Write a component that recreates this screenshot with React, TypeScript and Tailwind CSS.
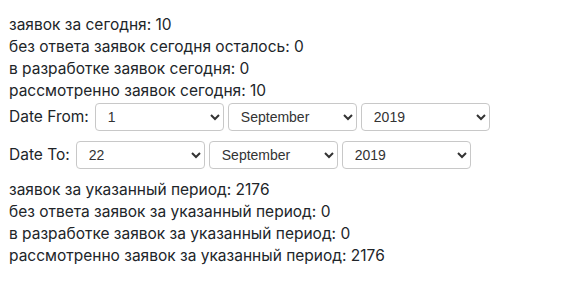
import React from 'react';

const days = Array.from({ length: 31 }, (_, i) => String(i + 1));
const months = [
  'January', 'February', 'March', 'April', 'May', 'June',
  'July', 'August', 'September', 'October', 'November', 'December',
];
const years = ['2017', '2018', '2019', '2020'];

function Sel({ value, options }: { value: string; options: string[] }) {
  return (
    <select
      defaultValue={value}
      className="w-[129px] h-[28px] rounded-[4px] border border-[#c8c8c8] bg-white pl-[8px] pr-[4px] text-[14px] text-[#333] font-['Liberation_Sans',Arial,sans-serif]"
    >
      {options.map((o) => (
        <option key={o} value={o}>
          {o}
        </option>
      ))}
    </select>
  );
}

export default function App() {
  return (
    <div className="pt-[14px] pl-[9px] text-[15.5px] leading-[22px] text-[#212529] font-['Inter',sans-serif]">
      <div>заявок за сегодня: 10</div>
      <div>без ответа заявок сегодня осталось: 0</div>
      <div>в разработке заявок сегодня: 0</div>
      <div>рассмотренно заявок сегодня: 10</div>

      <div className="flex items-center gap-[4px] mt-[1px]">
        <span className="mr-[2px]">Date From:</span>
        <Sel value="1" options={days} />
        <Sel value="September" options={months} />
        <Sel value="2019" options={years} />
      </div>
      <div className="flex items-center gap-[4px] mt-[10px]">
        <span className="mr-[2px]">Date To:</span>
        <Sel value="22" options={days} />
        <Sel value="September" options={months} />
        <Sel value="2019" options={years} />
      </div>

      <div className="mt-[10px]">
        <div>заявок за указанный период: 2176</div>
        <div>без ответа заявок за указанный период: 0</div>
        <div>в разработке заявок за указанный период: 0</div>
        <div>рассмотренно заявок за указанный период: 2176</div>
      </div>
    </div>
  );
}
